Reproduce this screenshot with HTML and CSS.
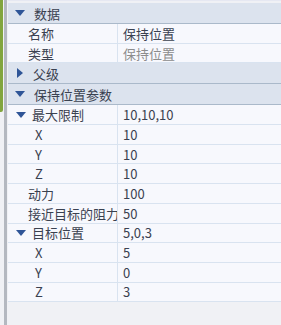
FILE: index.html
```html
<!DOCTYPE html>
<html lang="zh-CN">
<head>
  <meta charset="UTF-8">
  <meta name="viewport" content="width=device-width, initial-scale=1.0">
  <title>属性面板</title>
  <link rel="stylesheet" href="styles.css">
</head>
<body>
  <div class="frame">
    <!-- Left rail: green tab + splitter -->
    <div class="rail">
      <div class="rail-tab"></div>
      <div class="rail-line"></div>
    </div>

    <div class="panel">
      <div class="group"><span class="arrow down"></span>数据</div>
      <div class="row"><div class="name">名称</div><div class="value">保持位置</div></div>
      <div class="row"><div class="name">类型</div><div class="value readonly">保持位置</div></div>

      <div class="group"><span class="arrow right"></span>父级</div>

      <div class="group"><span class="arrow down"></span>保持位置参数</div>
      <div class="row"><div class="name sub"><span class="arrow down small"></span>最大限制</div><div class="value">10,10,10</div></div>
      <div class="row"><div class="name child">X</div><div class="value">10</div></div>
      <div class="row"><div class="name child">Y</div><div class="value">10</div></div>
      <div class="row"><div class="name child">Z</div><div class="value">10</div></div>
      <div class="row"><div class="name">动力</div><div class="value">100</div></div>
      <div class="row"><div class="name">接近目标的阻力</div><div class="value">50</div></div>
      <div class="row"><div class="name sub"><span class="arrow down small"></span>目标位置</div><div class="value">5,0,3</div></div>
      <div class="row"><div class="name child">X</div><div class="value">5</div></div>
      <div class="row"><div class="name child">Y</div><div class="value">0</div></div>
      <div class="row"><div class="name child">Z</div><div class="value">3</div></div>
    </div>
  </div>
</body>
</html>
```

FILE: styles.css
```css
/* Page */
body {
  margin: 0;
  font-family: "Noto Sans CJK SC", "Noto Sans", sans-serif;
  font-size: 13px;
  color: #3a4150;
  background-color: #f0f1f5;
}

.frame {
  display: flex;
  height: 325px;
  overflow: hidden;
}

/* Left rail */
.rail {
  display: flex;
  gap: 1px;
  width: 8px;
  flex-shrink: 0;
}

.rail-tab {
  width: 3px;
  height: 112px;
  background-color: #82a53e; /* green tab */
  border-radius: 0 0 2px 0;
}

.rail-line {
  width: 3px;
  background-color: #b4b8c0;
}

/* Property grid */
.panel {
  flex: 1;
  padding-top: 2px;
  border-top: 1px solid #e6e8f2;
  background-color: #f0f1f5;
}

.group {
  display: flex;
  align-items: center;
  height: 21px;
  box-sizing: border-box;
  padding-left: 7px;
  background-color: #dce3ee; /* header rows */
  border-bottom: 1px solid #aab9ca;
}

.row {
  display: flex;
  height: 19.7px;
  box-sizing: border-box;
  background-color: #f7f8fd;
  border-bottom: 1px solid #d9e3f0;
}

.name {
  display: flex;
  align-items: center;
  width: 110px;
  flex-shrink: 0;
  padding-left: 20px;
  box-sizing: border-box;
  border-right: 1px solid #d9e3f0;
  white-space: nowrap;
  overflow: hidden;
}

.name.sub {
  padding-left: 8px;
}

.name.child {
  padding-left: 27px;
}

.value {
  display: flex;
  align-items: center;
  padding-left: 5px;
}

.value.readonly {
  color: #8c8c8c;
}

/* Expand / collapse triangles */
.arrow {
  display: inline-block;
  width: 0;
  height: 0;
  margin-right: 9px;
}

.arrow.down {
  border-left: 5px solid transparent;
  border-right: 5px solid transparent;
  border-top: 6px solid #2f5597;
}

.arrow.right {
  margin-left: 2px;
  margin-right: 10px;
  border-top: 5px solid transparent;
  border-bottom: 5px solid transparent;
  border-left: 6px solid #2f5597;
}

.arrow.small {
  margin-right: 6px;
}
```
